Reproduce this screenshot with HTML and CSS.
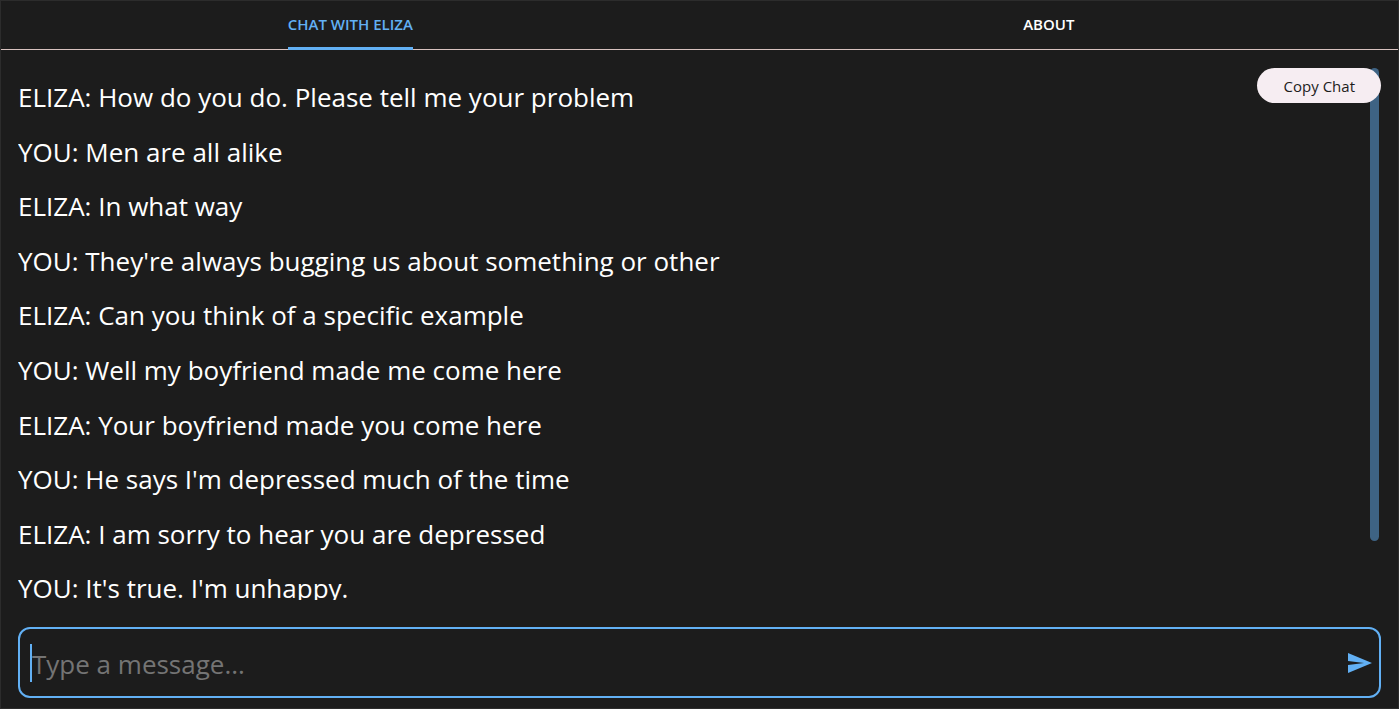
FILE: index.html
```
<!DOCTYPE html>
<html lang="en">

<head>
  <title>ELIZA</title>
  <meta name="viewport" content="width=device-width, initial-scale=1" />
  <meta charset="UTF-8" />
  <link rel="stylesheet" href="styles.css">
</head>

<body>
  <nav class="tabs">
    <a class="tab active" href="#chat"><span>CHAT WITH ELIZA</span></a>
    <a class="tab" href="#about"><span>ABOUT</span></a>
  </nav>
  <main class="chat" id="chat">
    <div class="history">
      <div class="messages">
        <p>ELIZA: How do you do. Please tell me your problem</p>
        <p>YOU: Men are all alike</p>
        <p>ELIZA: In what way</p>
        <p>YOU: They're always bugging us about something or other</p>
        <p>ELIZA: Can you think of a specific example</p>
        <p>YOU: Well my boyfriend made me come here</p>
        <p>ELIZA: Your boyfriend made you come here</p>
        <p>YOU: He says I'm depressed much of the time</p>
        <p>ELIZA: I am sorry to hear you are depressed</p>
        <p>YOU: It's true. I'm unhappy.</p>
      </div>
      <div class="scrollbar"></div>
      <button class="copy" type="button">Copy Chat</button>
    </div>
    <form class="composer">
      <span class="caret"></span>
      <input type="text" placeholder="Type a message..." aria-label="Message">
      <button class="send" type="button" aria-label="Send">
        <svg viewBox="0 0 24 20" width="24" height="20">
          <path d="M0 0 L24 10 L0 20 V12 L16 10 L0 8 Z" />
        </svg>
      </button>
    </form>
  </main>
</body>

</html>
```
FILE: styles.css
```
* {
  box-sizing: border-box;
}

body {
  margin: 0;
  height: 100vh;
  display: flex;
  flex-direction: column;
  border: 1px solid #2c2c2c;
  background-color: #1c1c1c;
  color: #fff;
  font-family: 'Open Sans', 'Noto Sans', sans-serif;
}

.tabs {
  display: flex;
  height: 49px;
  border-bottom: 1px solid #d8c2bf;
}

.tab {
  flex: 1;
  display: flex;
  justify-content: center;
  color: #fff;
  font-size: 15px;
  font-weight: 600;
  line-height: 46px;
  text-decoration: none;
}

.tab span {
  height: 49px;
}

.active {
  color: #62b0f4;
}

.active span {
  background: linear-gradient(#62b0f4, #62b0f4) bottom / 100% 3px no-repeat;
}

.chat {
  flex: 1;
  min-height: 0;
  display: flex;
  flex-direction: column;
  gap: 27px;
  padding: 18px 17px 10px;
}

.history {
  position: relative;
  flex: 1;
  min-height: 0;
}

.messages {
  height: 100%;
  padding-top: 2px;
  overflow: hidden;
  font-size: 26px;
  line-height: 2.1;
}

.messages p {
  margin: 0;
}

.scrollbar {
  position: absolute;
  top: 0;
  right: 2px;
  width: 9px;
  height: 89%;
  border-radius: 5px;
  background-color: #3e6384;
}

.copy {
  position: absolute;
  top: 0;
  right: 0;
  height: 35px;
  padding: 0 26px 0 27px;
  border: none;
  border-radius: 18px;
  background-color: #f6edf2;
  color: #1c1c1c;
  font-family: inherit;
  font-size: 15px;
}

.composer {
  display: flex;
  align-items: center;
  height: 71px;
  padding: 0 7px 0 10px;
  border: 2px solid #62b0f4;
  border-radius: 12px;
}

.caret {
  width: 2px;
  height: 38px;
  background-color: #62b0f4;
}

.composer input {
  flex: 1;
  min-width: 0;
  padding: 2px 0 0;
  border: none;
  outline: none;
  background: none;
  color: #fff;
  font-family: inherit;
  font-size: 26px;
}

.composer input::placeholder {
  color: #747474;
}

.send {
  display: flex;
  padding: 0;
  border: none;
  background: none;
}

.send svg {
  fill: #62b0f4;
}
```
